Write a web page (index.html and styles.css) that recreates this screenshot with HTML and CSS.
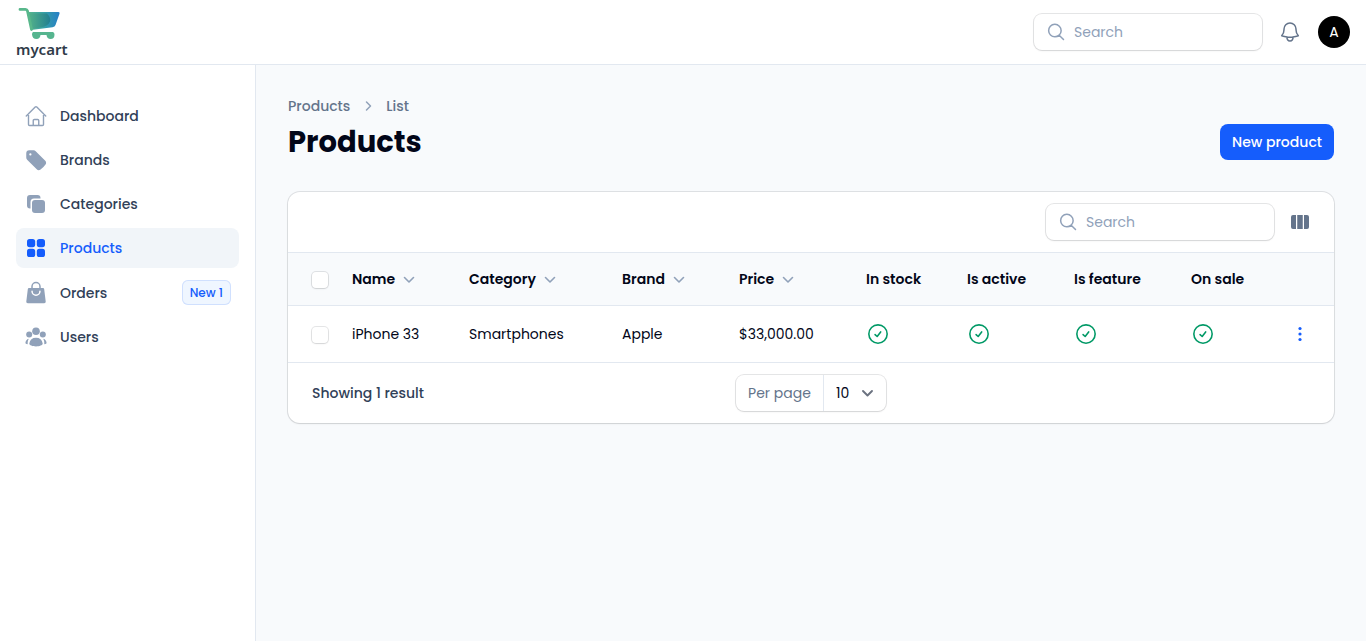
FILE: index.html
```html
<!DOCTYPE html>
<html lang="en">
<head>
<meta charset="utf-8">
<meta name="viewport" content="width=device-width, initial-scale=1">
<title>Products - mycart</title>
<link rel="stylesheet" href="styles.css">
</head>
<body>
<svg class="sprite" aria-hidden="true">
  <symbol id="search" viewBox="0 0 24 24"><path fill="none" stroke="currentColor" stroke-width="1.8" stroke-linecap="round" d="M21 21l-5.2-5.2m0 0A7.5 7.5 0 1 0 5.2 5.2a7.5 7.5 0 0 0 10.6 10.6z"/></symbol>
  <symbol id="down" viewBox="0 0 20 20"><path fill="none" stroke="currentColor" stroke-width="1.6" stroke-linecap="round" stroke-linejoin="round" d="M5.500 8.500l4.500 4.500L14.500 8.500"/></symbol>
  <symbol id="check" viewBox="0 0 24 24"><path fill="none" stroke="currentColor" stroke-width="1.900" stroke-linecap="round" stroke-linejoin="round" d="M8.500 12.750L11 15l4.200-5.500M23 12a11 11 0 1 1-22 0 11 11 0 0 1 22 0z"/></symbol>
</svg>
<header class="topbar">
  <a class="logo" href="#" aria-label="mycart home">
    <svg class="logo-cart" viewBox="0 0 44 34" aria-hidden="true">
      <defs>
        <linearGradient id="basket" x1="0" y1="0" x2="1" y2="0"><stop offset="0" stop-color="#59b58c"/><stop offset=".5" stop-color="#36a0a6"/><stop offset="1" stop-color="#267fc8"/></linearGradient>
        <linearGradient id="shade" x1="0" y1="0" x2="1" y2="0"><stop offset="0" stop-color="#53b28a"/><stop offset="1" stop-color="#237f91"/></linearGradient>
      </defs>
      <path fill="url(#basket)" d="M12 5h30.500q1.500 0 1 1.800L39.500 18q-.6 2-3 2.200L15 23z"/>
      <path fill="url(#shade)" d="M13 6.500h18q4 4 3 8-2 5-10 6l-9 1.500z"/>
      <path fill="none" stroke="#58b78b" stroke-width="2.800" stroke-linecap="round" stroke-linejoin="round" d="M4 2.400H9.500q1.500 0 2 1.600l4 18.500"/>
      <path fill="#56b58f" d="M17 25h20q1.500.5 1.500 2.500 0 4.500-4 4.500-3.500 0-4-4h-6q-.5 4-4 4-4 0-4.500-4.500 0-2 1-2.500z"/>
    </svg>
    <span class="logo-name">mycart</span>
  </a>
  <div class="topbar-tools">
    <label class="search"><svg class="icon" aria-hidden="true"><use href="#search"/></svg><input type="search" placeholder="Search" aria-label="Global search"></label>
    <button class="bell" type="button" aria-label="Notifications">
      <svg viewBox="0 0 24 24" aria-hidden="true"><path fill="none" stroke="currentColor" stroke-width="1.500" stroke-linecap="round" stroke-linejoin="round" d="M14.857 17.082a23.848 23.848 0 0 0 5.454-1.310A8.967 8.967 0 0 1 18 9.750V9A6 6 0 0 0 6 9v.75a8.967 8.967 0 0 1-2.312 6.022c1.733.64 3.560 1.085 5.455 1.310m5.714 0a24.255 24.255 0 0 1-5.714 0m5.714 0a3 3 0 1 1-5.714 0"/></svg>
    </button>
    <button class="avatar" type="button" aria-label="Account A">A</button>
  </div>
</header>
<div class="shell">
  <nav class="sidebar" aria-label="Main">
    <a class="nav-item" href="#"><svg viewBox="0 0 24 24" aria-hidden="true"><path fill="none" stroke="currentColor" stroke-width="1.400" stroke-linecap="round" stroke-linejoin="round" d="M2.250 12l8.954-8.955c.44-.439 1.152-.439 1.591 0L21.750 12M4.500 9.750v10.700c0 .620.500 1.100 1.100 1.100h12.800c.6 0 1.100-.500 1.100-1.100V9.750M9.250 21.500v-4.900c0-.620.500-1.100 1.100-1.100h3.300c.6 0 1.100.500 1.100 1.100v4.900"/></svg>Dashboard</a>
    <a class="nav-item" href="#"><svg viewBox="0 0 24 24" aria-hidden="true"><path fill="currentColor" fill-rule="evenodd" d="M5.250 2.250a3 3 0 0 0-3 3v4.318a3 3 0 0 0 .879 2.121l9.580 9.581c.92.92 2.390 1.186 3.548.428a18.849 18.849 0 0 0 5.441-5.440c.758-1.160.492-2.629-.428-3.548l-9.580-9.581a3 3 0 0 0-2.122-.879H5.250zM6.375 7.500a1.125 1.125 0 1 0 0-2.250 1.125 1.125 0 0 0 0 2.250z"/></svg>Brands</a>
    <a class="nav-item" href="#"><svg viewBox="0 0 24 24" aria-hidden="true"><path fill="currentColor" d="M6 3h7.500a3 3 0 0 1 3 3v.5H10A3.500 3.500 0 0 0 6.500 10v6.500H6a3 3 0 0 1-3-3V6a3 3 0 0 1 3-3z"/><rect x="8" y="8" width="13" height="13" rx="3" fill="currentColor"/></svg>Categories</a>
    <a class="nav-item active" href="#" aria-current="page"><svg viewBox="0 0 24 24" fill="currentColor" aria-hidden="true"><rect x="3" y="3" width="8.200" height="8.200" rx="2.600"/><rect x="12.800" y="3" width="8.200" height="8.200" rx="2.600"/><rect x="3" y="12.800" width="8.200" height="8.200" rx="2.600"/><rect x="12.800" y="12.800" width="8.200" height="8.200" rx="2.600"/></svg>Products</a>
    <a class="nav-item" href="#"><svg viewBox="0 0 24 24" aria-hidden="true"><path fill="none" stroke="currentColor" stroke-width="1.500" d="M8 8V5.500a4 4 0 0 1 8 0V8"/><path fill="currentColor" fill-rule="evenodd" d="M5.300 7h13.400c.8 0 1.400.5 1.500 1.300l1.500 12.200c.1 1-.6 1.700-1.500 1.700H3.800c-.9 0-1.600-.7-1.500-1.700L3.800 8.300C3.900 7.500 4.500 7 5.300 7zm2 3.300a4.700 4.700 0 0 0 9.400 0 .75.75 0 0 0-1.500 0 3.200 3.200 0 0 1-6.400 0 .75.75 0 0 0-1.500 0z"/></svg>Orders<span class="badge">New 1</span></a>
    <a class="nav-item" href="#"><svg viewBox="0 0 24 24" fill="currentColor" aria-hidden="true"><circle cx="12" cy="6.200" r="3.800"/><circle cx="5.200" cy="9.500" r="3"/><circle cx="18.800" cy="9.500" r="3"/><path d="M5.300 18.500a6.800 7 0 0 1 13.400 0c0 1.800-3.200 2.900-6.700 2.900s-6.700-1.100-6.700-2.900zM4.800 13.800c-2.300.4-3.400 2.500-3.400 4.500.7.6 1.400.9 2.300 1-.1-2.300.1-4 1.100-5.500zM19.200 13.800c2.300.4 3.400 2.500 3.400 4.500-.7.6-1.400.9-2.300 1 .1-2.300-.1-4-1.100-5.500z"/></svg>Users</a>
  </nav>
  <main class="content">
    <nav class="crumbs" aria-label="Breadcrumb"><a href="#">Products</a><svg class="icon crumb-arrow" viewBox="0 0 20 20" aria-hidden="true"><path fill="none" stroke="currentColor" stroke-width="1.500" stroke-linecap="round" stroke-linejoin="round" d="M8.500 6l4 4-4 4"/></svg><span>List</span></nav>
    <div class="page-head"><h1>Products</h1><button class="primary" type="button">New product</button></div>
    <section class="card">
      <div class="toolbar">
        <label class="search"><svg class="icon" aria-hidden="true"><use href="#search"/></svg><input type="search" placeholder="Search" aria-label="Search products"></label>
        <button class="columns" type="button" aria-label="Toggle columns"><svg class="icon" viewBox="0 0 20 20" fill="currentColor" aria-hidden="true"><path d="M3 3h3v14H3q-2 0-2-2V5q0-2 2-2zM7.250 3h5.500v14h-5.500zM14 3h3q2 0 2 2v10q0 2-2 2h-3z"/></svg></button>
      </div>
      <div class="table-wrap">
      <table>
        <colgroup><col class="w-select"><col class="w-name"><col class="w-category"><col class="w-name"><col class="w-price"><col class="w-stock"><col class="w-active"><col class="w-name"><col class="w-sale"><col></colgroup>
        <thead><tr>
          <th class="pick"><input type="checkbox" aria-label="Select all products"></th>
          <th><button type="button">Name<svg class="icon" aria-hidden="true"><use href="#down"/></svg></button></th>
          <th><button type="button">Category<svg class="icon" aria-hidden="true"><use href="#down"/></svg></button></th>
          <th><button type="button">Brand<svg class="icon" aria-hidden="true"><use href="#down"/></svg></button></th>
          <th><button type="button">Price<svg class="icon" aria-hidden="true"><use href="#down"/></svg></button></th>
          <th>In stock</th><th>Is active</th><th>Is feature</th><th>On sale</th><th></th>
        </tr></thead>
        <tbody><tr>
          <td class="pick"><input type="checkbox" aria-label="Select iPhone 33"></td>
          <td>iPhone 33</td><td>Smartphones</td><td>Apple</td><td>$33,000.00</td>
          <td><svg class="check" role="img" aria-label="Yes"><use href="#check"/></svg></td>
          <td><svg class="check" role="img" aria-label="Yes"><use href="#check"/></svg></td>
          <td><svg class="check" role="img" aria-label="Yes"><use href="#check"/></svg></td>
          <td><svg class="check" role="img" aria-label="Yes"><use href="#check"/></svg></td>
          <td class="actions"><button type="button" aria-label="Actions"><svg class="icon" viewBox="0 0 20 20" fill="currentColor" aria-hidden="true"><circle cx="10" cy="4.500" r="1.600"/><circle cx="10" cy="10" r="1.600"/><circle cx="10" cy="15.500" r="1.600"/></svg></button></td>
        </tr></tbody>
      </table>
      </div>
      <footer class="pager">
        <span>Showing 1 result</span>
        <div class="per-page">
          <label for="per-page">Per page</label>
          <div class="select"><select id="per-page"><option>5</option><option selected>10</option><option>25</option><option>50</option></select><svg class="icon" viewBox="0 0 20 20" aria-hidden="true"><path fill="none" stroke="currentColor" stroke-width="1.900" stroke-linecap="round" stroke-linejoin="round" d="M5 8l4.500 4.500L14 8"/></svg></div>
        </div>
      </footer>
    </section>
  </main>
</div>
</body>
</html>
```

FILE: styles.css
```css
:root {
  --line: #e2e8f0;
  --muted: #64748b;
  --soft: #90a1b9;
  --ink: #020618;
  --blue: #155dfc;
  --ring: 0 0 0 1px rgba(2, 6, 23, 0.1), 0 1px 2px rgba(0, 0, 0, 0.08);
}
* { box-sizing: border-box; }
body {
  margin: 0;
  min-height: 100vh;
  display: flex;
  flex-direction: column;
  background: #f8fafc;
  color: var(--ink);
  font: 400 14px/20px Poppins, Inter, "Liberation Sans", sans-serif;
}
button, input, select { font: inherit; color: inherit; }
button { border: 0; padding: 0; background: none; cursor: pointer; }
a { color: inherit; text-decoration: none; }
svg { display: block; flex: none; }
.sprite { display: none; }
.icon { width: 20px; height: 20px; }

.topbar {
  display: flex;
  align-items: center;
  justify-content: space-between;
  height: 65px;
  padding: 0 16px;
  background: #fff;
  border-bottom: 1px solid var(--line);
}
.logo { display: flex; flex-direction: column; }
.logo-cart { width: 44px; height: 34px; }
.logo-name {
  color: #303b49;
  font: 600 15px/16px "Noto Sans", sans-serif;
}
.topbar-tools { display: flex; align-items: center; gap: 16px; }
.search {
  display: flex;
  align-items: center;
  gap: 8px;
  width: 228px;
  height: 36px;
  padding: 0 12px;
  border-radius: 8px;
  background: #fff;
  color: var(--soft);
  box-shadow: var(--ring);
}
.search input {
  flex: 1;
  min-width: 0;
  padding: 0;
  border: 0;
  outline: 0;
  background: none;
  color: var(--ink);
}
.search input::placeholder { color: var(--soft); opacity: 1; }
.bell { color: var(--muted); }
.bell svg { width: 24px; height: 24px; }
.avatar {
  width: 32px;
  height: 32px;
  border-radius: 50%;
  background: #000;
  color: #fff;
}

.shell { flex: 1; display: flex; }
.sidebar {
  display: flex;
  flex: none;
  flex-direction: column;
  gap: 4px;
  width: 256px;
  padding: 31px 16px;
  background: #fff;
  border-right: 1px solid var(--line);
}
.nav-item {
  display: flex;
  align-items: center;
  gap: 12px;
  padding: 8px;
  border-radius: 8px;
  color: #314158;
  font-weight: 500;
}
.nav-item svg { width: 24px; height: 24px; color: var(--soft); }
.nav-item.active { background: #f1f5f9; color: var(--blue); }
.nav-item.active svg { color: var(--blue); }
.badge {
  margin-left: auto;
  padding: 3px 8px 2px;
  border-radius: 6px;
  background: #eff6ff;
  box-shadow: inset 0 0 0 1px #d0e0fe;
  color: var(--blue);
  font-size: 12px;
}

.content { flex: 1; min-width: 0; padding: 31px 32px; }
.crumbs {
  display: flex;
  align-items: center;
  gap: 8px;
  color: var(--muted);
  font-weight: 500;
}
.crumb-arrow { color: var(--soft); }
.page-head {
  display: flex;
  align-items: center;
  justify-content: space-between;
  margin: 8px 0 32px;
}
h1 { margin: 0; font-size: 29px; line-height: 36px; font-weight: 700; }
.primary {
  height: 36px;
  padding: 0 12px;
  border-radius: 8px;
  background: var(--blue);
  color: #fff;
  font-weight: 500;
}

.card { border-radius: 12px; background: #fff; box-shadow: var(--ring); }
.toolbar {
  display: flex;
  align-items: center;
  justify-content: flex-end;
  gap: 16px;
  padding: 12px 24px;
  border-bottom: 1px solid var(--line);
}
.columns { color: var(--muted); }
.table-wrap { overflow-x: auto; }
table {
  width: 100%;
  min-width: 1040px;
  table-layout: fixed;
  border-collapse: separate;
  border-spacing: 0;
}
.w-select { width: 52px; }
.w-name { width: 117px; }
.w-category { width: 153px; }
.w-price { width: 127px; }
.w-stock { width: 101px; }
.w-active { width: 107px; }
.w-sale { width: 97px; }
th, td {
  padding: 0 12px;
  border-bottom: 1px solid var(--line);
  text-align: left;
  vertical-align: middle;
}
th { height: 53px; background: #f8fafc; font-weight: 600; }
td { height: 57px; }
th button { display: flex; align-items: center; gap: 4px; }
th .icon { color: var(--soft); }
th.pick, td.pick { padding: 2px 0 0 24px; }
input[type="checkbox"] {
  appearance: none;
  display: block;
  width: 16px;
  height: 16px;
  margin: 0;
  border-radius: 4px;
  background: #fff;
  box-shadow: var(--ring);
}
input[type="checkbox"]:checked { background: var(--blue); }
.check { width: 24px; height: 20px; color: #009966; }
.actions { padding-right: 24px; }
.actions button { display: block; margin-left: auto; color: var(--blue); }

.pager {
  display: grid;
  grid-template-columns: 1fr auto 1fr;
  align-items: center;
  padding: 12px 24px;
  color: #45556c;
  font-weight: 500;
}
.pager > span { color: #314158; }
.per-page {
  display: flex;
  height: 36px;
  border-radius: 8px;
  box-shadow: var(--ring);
  font-weight: 400;
}
.per-page label {
  padding: 8px 12px;
  border-right: 1px solid var(--line);
  color: var(--muted);
}
.select { display: grid; width: 62px; }
.select select {
  grid-area: 1 / 1;
  appearance: none;
  padding: 0 12px;
  border: 0;
  background: none;
  color: var(--ink);
}
.select .icon {
  grid-area: 1 / 1;
  place-self: center end;
  margin-right: 8px;
  color: #6b7280;
  pointer-events: none;
}
```
